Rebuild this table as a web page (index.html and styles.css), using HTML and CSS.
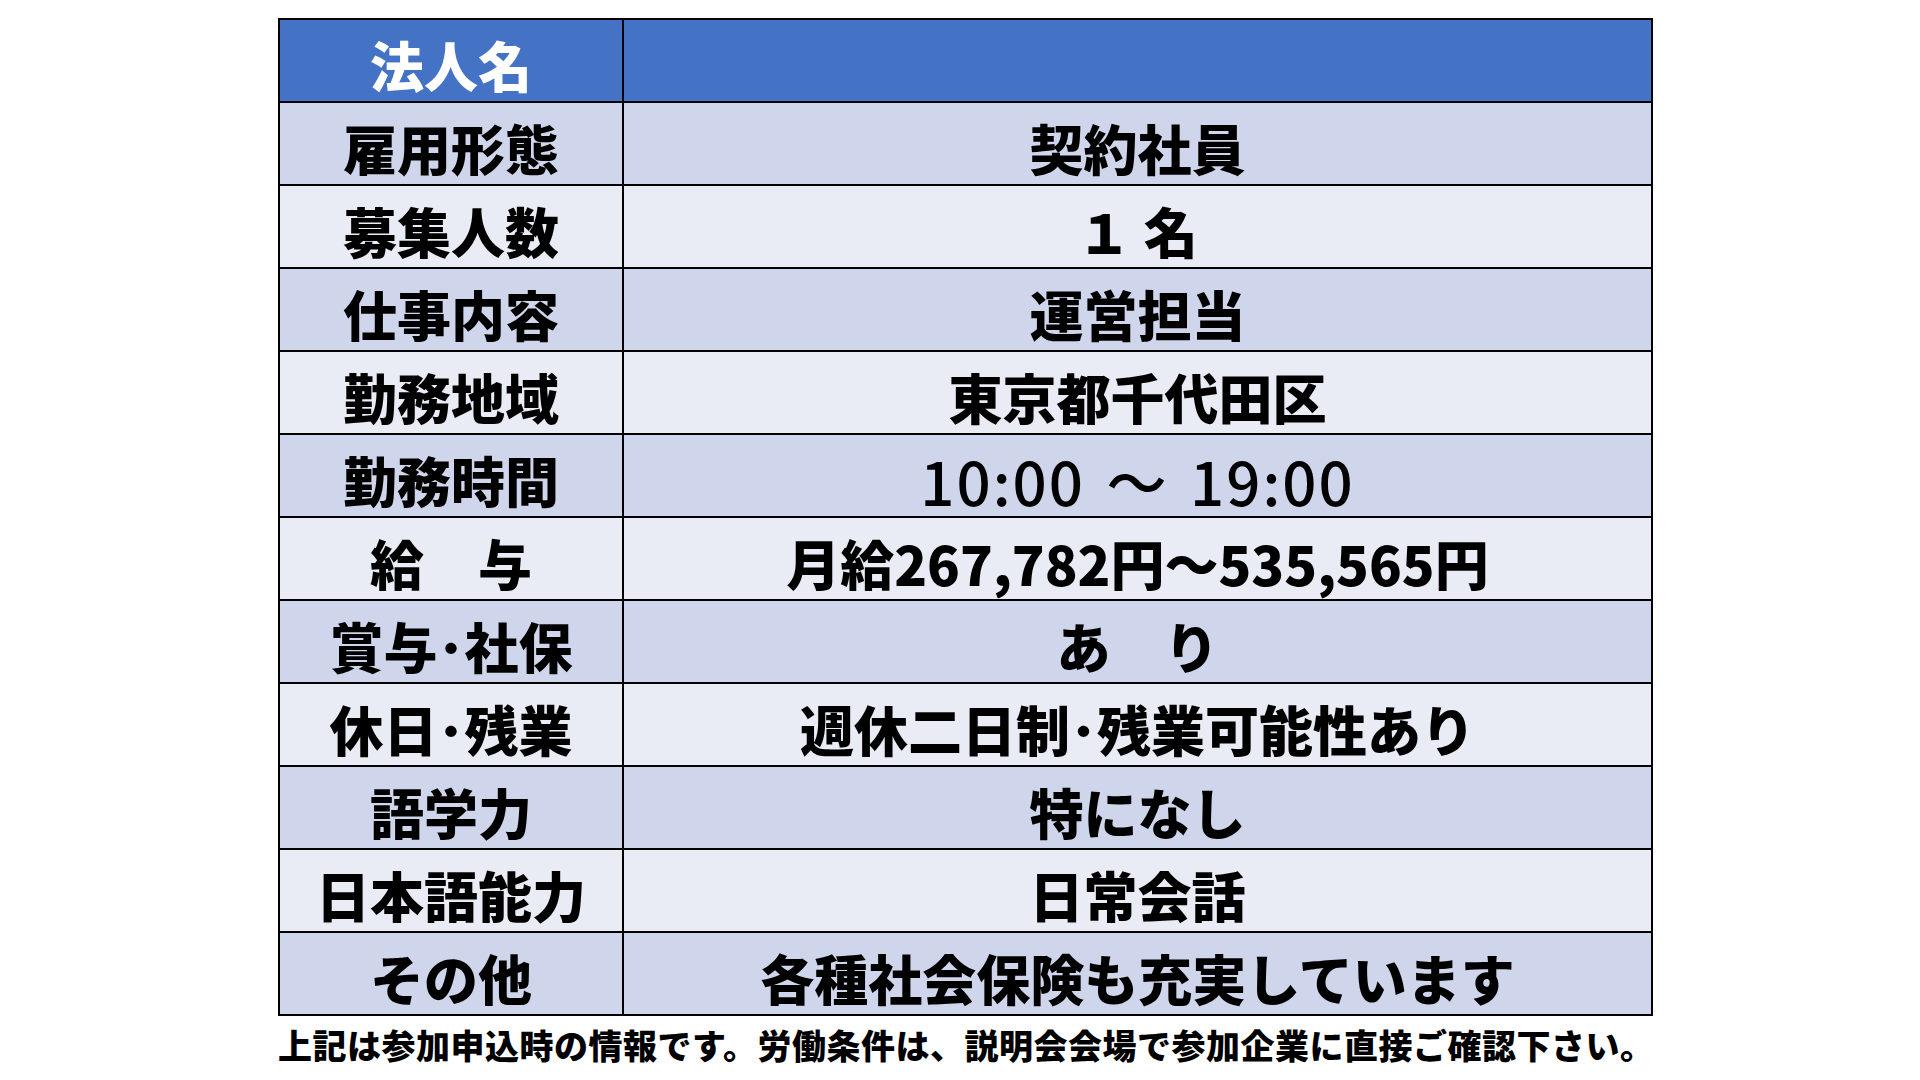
FILE: index.html
```html
<!DOCTYPE html>
<html lang="ja">
<head>
<meta charset="utf-8">
<title>求人情報</title>
<link rel="stylesheet" href="styles.css">
</head>
<body>
<div class="page">
  <table class="job">
    <tr class="head"><th>法人名</th><td></td></tr>
    <tr class="dark"><th>雇用形態</th><td>契約社員</td></tr>
    <tr class="light"><th>募集人数</th><td>１ 名</td></tr>
    <tr class="dark"><th>仕事内容</th><td>運営担当</td></tr>
    <tr class="light"><th>勤務地域</th><td>東京都千代田区</td></tr>
    <tr class="dark"><th>勤務時間</th><td class="time">10:00 ～ 19:00</td></tr>
    <tr class="light"><th>給　与</th><td>月給267,782円～535,565円</td></tr>
    <tr class="dark"><th>賞与･社保</th><td>あ　り</td></tr>
    <tr class="light"><th>休日･残業</th><td>週休二日制･残業可能性あり</td></tr>
    <tr class="dark"><th>語学力</th><td>特になし</td></tr>
    <tr class="light"><th>日本語能力</th><td>日常会話</td></tr>
    <tr class="dark"><th>その他</th><td>各種社会保険も充実しています</td></tr>
  </table>
  <p class="note">上記は参加申込時の情報です。労働条件は、説明会会場で参加企業に直接ご確認下さい。</p>
</div>
</body>
</html>
```
FILE: styles.css
```css
html, body {
  margin: 0;
  padding: 0;
  background: #ffffff;
}
.page {
  width: 1920px;
  height: 1080px;
  padding: 18px 0 0 278px;
  box-sizing: border-box;
  font-family: "Noto Sans CJK JP", "Noto Sans", sans-serif;
}
.job {
  border-collapse: collapse;
  width: 1375px;
  table-layout: fixed;
}
.job th, .job td {
  height: 83px;
  padding: 8px 0 0 0;
  border: 2px solid #000;
  text-align: center;
  vertical-align: middle;
  font-size: 54px;
  font-weight: 900;
  line-height: 1;
  color: #000;
  box-sizing: border-box;
}
.job th {
  width: 344px;
}
.job .head th, .job .head td {
  background: #4472c4;
  color: #ffffff;
}
.job .dark th, .job .dark td {
  background: #cfd5ea;
}
.job .light th, .job .light td {
  background: #e9ebf5;
}
.job td.time {
  font-weight: 500;
  font-size: 60px;
  letter-spacing: 2px;
  word-spacing: 6px;
}
.note {
  margin: 9px 0 0 0;
  font-size: 34px;
  font-weight: 900;
  line-height: 1.2;
  color: #000;
  letter-spacing: 0.5px;
}
```
